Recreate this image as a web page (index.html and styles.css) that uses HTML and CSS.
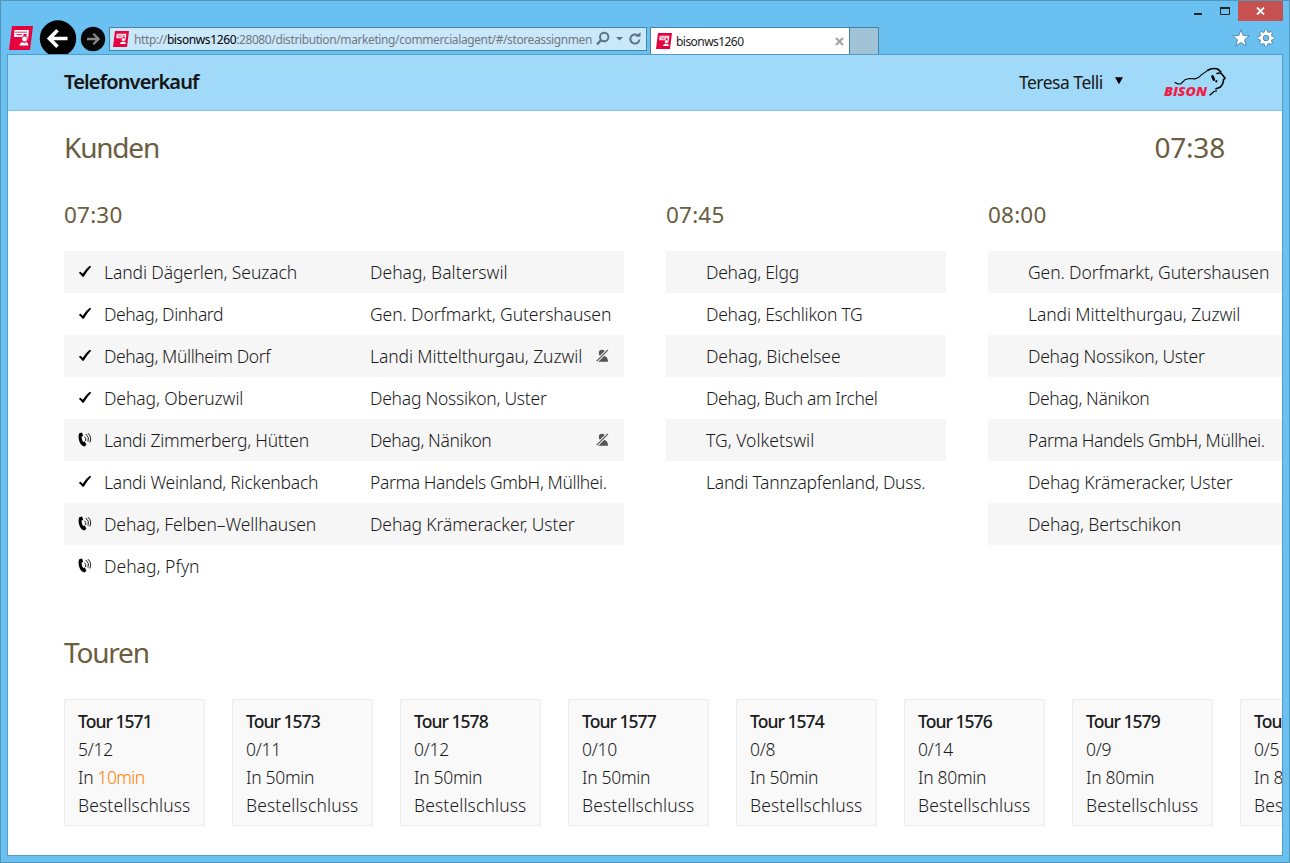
FILE: index.html
```html
<!DOCTYPE html>
<html lang="de">
<head>
<meta charset="utf-8">
<title>bisonws1260</title>
<link rel="stylesheet" href="styles.css">
</head>
<body>
<svg class="defs" width="0" height="0">
  <symbol id="app" viewBox="0 0 24 24"><path d="M3 0H24L21 24H0z" fill="#e6003e"/><path d="M5.500 4H20L19 14H15V11H5z" fill="#fff"/><path d="M6 6.200H18" stroke="#e6003e" stroke-width=".8"/><path d="M7.500 8.700H13" stroke="#e6003e" stroke-width="1"/><path d="M14.500 8h3v2.500h-3z" fill="#e6003e"/><circle cx="15.600" cy="13" r="2.900" fill="#fff" stroke="#e6003e" stroke-width=".8"/><path d="M10.500 19.500q0-3 3.500-3.300l1.300 1 1.400-1q2.800.4 2.600 3.300z" fill="#fff"/></symbol>
  <symbol id="check" viewBox="0 0 14 14"><path d="M.8 8.200 2.500 7.200l2.200 2Q7.500 4.500 11.800 1.200L13.200 2.300Q9 6.500 5.700 12.300H4.500Q3 10 .8 8.200z"/></symbol>
  <symbol id="phone" viewBox="0 0 14 15"><path d="M1.200 1.200 4 .4l1.200 3.400-1.700.9q.1 3 1.700 5.200l1.700-.4L8.400 13l-2.200 1.400C1.800 13.600-.6 6 1.200 1.200z"/><path d="M6.500 4.700Q8.700 6.400 7.500 9M7.800 2q4 3.200 2.200 7.700M10 1.200q4.200 4 1.800 9.300" fill="none" stroke="#000" stroke-width=".9"/></symbol>
  <symbol id="nouser" viewBox="0 0 13 14"><circle cx="6" cy="4" r="3.200"/><path d="M1 12.800q0-3.600 3.600-4.600L8.500 7q3.500 1 3.500 5.800z"/><path d="M.5 12.500 12 .8" stroke="#f6f6f6" stroke-width="3"/><path d="M.7 12.200 12 .9" stroke="#555" stroke-width="1.200"/></symbol>
</svg>
<div class="window">
  <div class="chrome">
    <svg class="appicon"><use href="#app"/></svg>
    <svg class="back" viewBox="0 0 38 34"><circle cx="19" cy="18.500" r="18.200" fill="#000"/><path d="M28.500 18.500H11M18.500 10.300 10.400 18.500l8.100 8.200" fill="none" stroke="#fff" stroke-width="3.700"/></svg>
    <svg class="forward" viewBox="0 0 26 26"><circle cx="13" cy="13" r="12.200" fill="#080808"/><path d="M7 13H18M13.300 7.700 18.600 13l-5.300 5.300" fill="none" stroke="#888" stroke-width="2.300"/></svg>
    <div class="address">
      <svg class="favicon"><use href="#app"/></svg>
      <span class="url">http://<b>bisonws1260</b>:28080/distribution/marketing/commercialagent/#/storeassignmen</span>
      <svg class="tools" viewBox="0 0 46 16"><g fill="none" stroke="#5d7380" stroke-width="2"><circle cx="8.200" cy="6" r="4.200"/><path d="M5.200 9 1 13.300" stroke-width="2.400"/><path d="M41.800 4.400A4.600 4.600 0 1 0 43.500 8.500"/></g><path d="M20 6h7l-3.500 3.600zM39.500 5.800h5V1z" fill="#5d7380"/></svg>
    </div>
    <div class="tab"><svg class="favicon"><use href="#app"/></svg><span class="tabtext">bisonws1260</span><svg class="tabclose" viewBox="0 0 9 9"><path d="m1 1 7 7m0-7L1 8" stroke="#a5a5a5" stroke-width="2.300"/></svg></div>
    <div class="newtab"></div>
    <svg class="star" viewBox="0 0 18 18"><path d="m9 .8 2.200 5.700 6 .4-4.600 3.800 1.600 6.300L9 13.500 3.800 17l1.600-6.300L.8 6.900l6-.4z" fill="#fff" stroke="#4f819c" stroke-width=".9"/></svg>
    <svg class="gear" viewBox="0 0 18 18"><g fill="none" stroke="#4d87a6"><circle cx="9" cy="9" r="4.500" stroke-width="4.600"/><path d="M9 .8V4M9 14v3.200M.8 9H4m10 0h3.200M3.200 3.200l2.300 2.300m7 7 2.300 2.300m0-11.600-2.300 2.300m-7 7-2.300 2.300" stroke-width="4"/></g><g fill="none" stroke="#fff"><circle cx="9" cy="9" r="4.500" stroke-width="2.800"/><path d="M9 1.300V4M9 14v2.700M1.300 9H4m10 0h2.700M3.600 3.600l2 2m6.800 6.800 2 2m0-10.800-2 2m-6.800 6.800-2 2" stroke-width="2.300"/></g></svg>
    <div class="controls">
      <svg class="minmax" viewBox="0 0 38 20"><path d="M2 13h8v2H2z" fill="#222"/><path d="M28.500 7.500h9v7h-9z" fill="none" stroke="#222"/><path d="M28 7h10v2H28z" fill="#222"/></svg>
      <div class="close"><svg width="9" height="8" viewBox="0 0 9 8"><path d="m1 .5 7 7m0-7-7 7" stroke="#fff" stroke-width="1.800"/></svg></div>
    </div>
  </div>
  <div class="page">
    <header class="header">
      <h1>Telefonverkauf</h1>
      <span class="user">Teresa Telli</span>
      <svg class="caret" viewBox="0 0 8 8"><path d="M0 .3h8L4 7.300z"/></svg>
      <svg class="logo" viewBox="0 0 64 34"><text x="0" y="29" textLength="43" lengthAdjust="spacingAndGlyphs">BISON</text><g fill="none" stroke="#000" stroke-linecap="round"><path d="M11 15.500q3 2 6 1.200l4-4 4-1.200 6 .4q4-1 7-4.500 5-4 9-5.600" stroke-width="1.100"/><path d="M44 3Q50 .5 54 2.300l3 2.700" stroke-width="1.600"/><path d="M53 6.500q4-1.500 6 2l2 2.700-1.500 1.600q-.2 5-3.500 7.500l-4 1.500" stroke-width="1.600"/><path d="M48.500 9.500l1.300 3" stroke-width="2.700"/><path d="M52.300 14v.5" stroke-width="2"/><path d="M46 28l4-3.500 2.500-.7" stroke-width="1.200"/></g></svg>
    </header>
    <main class="main">
      <div class="title"><h2>Kunden</h2><span class="clock">07:38</span></div>
      <div class="slots">
        <section class="slot wide"><h3>07:30</h3>
          <div class="grid">
            <div class="row"><svg class="st"><use href="#check"/></svg><span class="n loose">Landi Dägerlen, Seuzach</span><span class="m open">Dehag, Balterswil</span></div>
            <div class="row"><svg class="st"><use href="#check"/></svg><span class="n tight">Dehag, Dinhard</span><span class="m loose">Gen. Dorfmarkt, Gutershausen</span></div>
            <div class="row"><svg class="st"><use href="#check"/></svg><span class="n tight">Dehag, Müllheim Dorf</span><span class="m loose">Landi Mittelthurgau, Zuzwil</span><svg class="nu"><use href="#nouser"/></svg></div>
            <div class="row"><svg class="st"><use href="#check"/></svg><span class="n loose">Dehag, Oberuzwil</span><span class="m">Dehag Nossikon, Uster</span></div>
            <div class="row"><svg class="st"><use href="#phone"/></svg><span class="n">Landi Zimmerberg, Hütten</span><span class="m tight">Dehag, Nänikon</span><svg class="nu"><use href="#nouser"/></svg></div>
            <div class="row"><svg class="st"><use href="#check"/></svg><span class="n">Landi Weinland, Rickenbach</span><span class="m tight">Parma Handels GmbH, Müllhei.</span></div>
            <div class="row"><svg class="st"><use href="#phone"/></svg><span class="n loose">Dehag, Felben–Wellhausen</span><span class="m loose">Dehag Krämeracker, Uster</span></div>
            <div class="row"><svg class="st"><use href="#phone"/></svg><span class="n open">Dehag, Pfyn</span></div>
          </div>
        </section>
        <section class="slot"><h3>07:45</h3>
          <div class="grid">
            <div class="row">Dehag, Elgg</div><div class="row">Dehag, Eschlikon TG</div><div class="row loose">Dehag, Bichelsee</div><div class="row tight">Dehag, Buch am Irchel</div><div class="row open">TG, Volketswil</div><div class="row">Landi Tannzapfenland, Duss.</div>
          </div>
        </section>
        <section class="slot last"><h3>08:00</h3>
          <div class="grid">
            <div class="row loose">Gen. Dorfmarkt, Gutershausen</div><div class="row loose">Landi Mittelthurgau, Zuzwil</div><div class="row">Dehag Nossikon, Uster</div><div class="row tight">Dehag, Nänikon</div><div class="row tight">Parma Handels GmbH, Müllhei.</div><div class="row loose">Dehag Krämeracker, Uster</div><div class="row loose">Dehag, Bertschikon</div>
          </div>
        </section>
      </div>
      <h2 class="touren">Touren</h2>
      <div class="tours">
        <div class="tour"><b>Tour 1571</b><span>5/12</span><span>In <em>10min</em></span><span class="due">Bestellschluss</span></div>
        <div class="tour"><b>Tour 1573</b><span>0/11</span><span>In 50min</span><span class="due">Bestellschluss</span></div>
        <div class="tour"><b>Tour 1578</b><span>0/12</span><span>In 50min</span><span class="due">Bestellschluss</span></div>
        <div class="tour"><b>Tour 1577</b><span>0/10</span><span>In 50min</span><span class="due">Bestellschluss</span></div>
        <div class="tour"><b>Tour 1574</b><span>0/8</span><span>In 50min</span><span class="due">Bestellschluss</span></div>
        <div class="tour"><b>Tour 1576</b><span>0/14</span><span>In 80min</span><span class="due">Bestellschluss</span></div>
        <div class="tour"><b>Tour 1579</b><span>0/9</span><span>In 80min</span><span class="due">Bestellschluss</span></div>
        <div class="tour"><b>Tour 1580</b><span>0/5</span><span>In 80min</span><span class="due">Bestellschluss</span></div>
      </div>
    </main>
  </div>
</div>
</body>
</html>
```
FILE: styles.css
```css
* { box-sizing: border-box; }
body { margin: 0; font-family: "Noto Sans", "Open Sans", sans-serif; color: #1a1a1a; }
svg { display: block; flex: none; }
.defs { position: absolute; }
h1, h2, h3 { margin: 0; font-weight: 400; }
.window { width: 1290px; height: 863px; display: flex; flex-direction: column; background: #69c0f1; border: 1px solid #4f96ba; overflow: hidden; }
.chrome { position: relative; flex: none; height: 53px; display: flex; align-items: flex-start; padding: 26px 0 0 8px; }
.appicon { width: 24px; height: 24px; margin-top: -1px; }
.back { width: 38px; height: 34px; margin: -7px 0 0 6px; }
.forward { width: 26px; height: 26px; margin: -1px 0 0 3px; }
.address { width: 538px; height: 24px; margin: 0 1px 0 3px; border: 1px solid #4482a6; background: #cae8fb; display: flex; align-items: center; padding-left: 3px; }
.favicon { width: 16px; height: 16px; }
.url { width: 458px; margin-left: 5px; font: 12px "Noto Sans", sans-serif; color: #6f797f; white-space: nowrap; letter-spacing: -.39px; }
.url b { font-weight: 400; color: #000; }
.tools { width: 46px; height: 16px; margin-left: 4px; }
.tab { width: 200px; height: 27px; margin-left: 2px; border: 1px solid #4482a6; border-bottom: 0; background: #fff; display: flex; align-items: center; padding-left: 5px; }
.tabtext { width: 158px; margin-left: 4px; font: 12px "Noto Sans", sans-serif; letter-spacing: -.55px; color: #222; }
.tabclose { width: 9px; height: 9px; margin-left: 1px; }
.newtab { width: 29px; height: 27px; border: 1px solid #4482a6; border-width: 1px 1px 0 0; background: #a1c3d8; }
.star { width: 18px; height: 18px; margin: 2px 0 0 353px; }
.gear { width: 18px; height: 18px; margin: 2px 0 0 7px; }
.controls { position: absolute; top: 0; right: 6px; display: flex; gap: 8px; }
.minmax { width: 38px; height: 20px; margin-top: -1px; }
.close { width: 45px; height: 20px; background: #c75050; display: flex; align-items: center; justify-content: center; }
.page { flex: 1; min-height: 0; margin: 0 6px 6px; border: 1px solid #559cc6; background: #fff; overflow: hidden; }
.header { height: 56px; background: #a1d9f8; border-bottom: 1px solid #7ec4f4; display: flex; align-items: center; padding: 0 0 2px 56px; }
.header h1 { width: 955px; font-size: 20px; font-weight: 600; letter-spacing: -.85px; color: #151515; line-height: 54px; }
.user { width: 85px; font-size: 17.500px; letter-spacing: -.5px; white-space: nowrap; }
.caret { width: 8px; height: 8px; margin: -2px 0 0 11px; }
.logo { width: 64px; height: 34px; margin: 4px 0 0 41px; }
.logo text { font: italic 800 12.800px "Open Sans", sans-serif; fill: #f01e46; }
.main { padding-left: 56px; }
.title { display: flex; justify-content: space-between; padding: 17px 57px 0 0; height: 85px; }
h2, .clock { font-size: 28px; line-height: 38px; color: #6a5d40; letter-spacing: -.2px; }
h2 { letter-spacing: -1.2px; }
.slots { display: flex; gap: 42px; height: 437px; }
.slot { flex: none; width: 280px; }
.wide { width: 560px; }
.last { width: 400px; }
h3 { font-size: 22.500px; line-height: 38px; height: 55px; color: #6a5d40; letter-spacing: .2px; }
.row { height: 42px; display: flex; align-items: center; font-size: 17.500px; font-weight: 350; white-space: nowrap; padding: 0 0 1px 40px; letter-spacing: -.25px; }
.row:nth-child(odd) { background: #f6f6f6; }
.wide .row { padding-left: 14px; }
.tight { letter-spacing: -.4px; }
.loose { letter-spacing: -.1px; }
.open { letter-spacing: .03px; }
.st { width: 14px; height: 15px; margin-right: 12px; }
.n { width: 266px; }
.m { width: 226px; }
.nu { width: 13px; height: 14px; fill: #555; margin-top: 1px; }
.touren { height: 66px; }
.tours { display: flex; gap: 27px; }
.tour { flex: none; width: 141px; height: 127px; border: 1px solid #ededed; background: #f9f9f9; padding: 7px 0 0 13px; display: flex; flex-direction: column; font-size: 17.500px; font-weight: 350; line-height: 28px; letter-spacing: -.3px; white-space: nowrap; }
.tour b { font-weight: 500; letter-spacing: -.95px; }
.due { letter-spacing: .13px; }
.tour em { font-style: normal; color: #ff8000; letter-spacing: -.6px; }
```
